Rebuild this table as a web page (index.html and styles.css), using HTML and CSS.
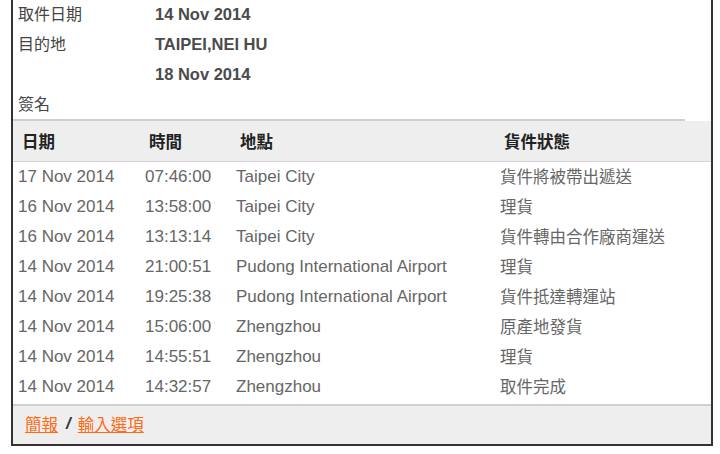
FILE: index.html
```html
<!DOCTYPE html>
<html lang="zh-Hant">
<head>
<meta charset="utf-8">
<title>貨件追蹤</title>
<link rel="stylesheet" href="styles.css">
</head>
<body>
<div class="panel">
  <div class="info">
    <div class="info-row"><span class="label zh">取件日期</span><span class="value">14 Nov 2014</span></div>
    <div class="info-row"><span class="label zh">目的地</span><span class="value">TAIPEI,NEI HU</span></div>
    <div class="info-row"><span class="label zh"></span><span class="value">18 Nov 2014</span></div>
    <div class="info-row"><span class="label zh">簽名</span><span class="value"></span></div>
  </div>
  <div class="divider"></div>
  <div class="table">
    <div class="thead">
      <div class="th zh">日期</div><div class="th zh">時間</div><div class="th zh">地點</div><div class="th zh">貨件狀態</div>
    </div>
    <div class="tr"><div class="td">17 Nov 2014</div><div class="td">07:46:00</div><div class="td">Taipei City</div><div class="td zh">貨件將被帶出遞送</div></div>
    <div class="tr"><div class="td">16 Nov 2014</div><div class="td">13:58:00</div><div class="td">Taipei City</div><div class="td zh">理貨</div></div>
    <div class="tr"><div class="td">16 Nov 2014</div><div class="td">13:13:14</div><div class="td">Taipei City</div><div class="td zh">貨件轉由合作廠商運送</div></div>
    <div class="tr"><div class="td">14 Nov 2014</div><div class="td">21:00:51</div><div class="td">Pudong International Airport</div><div class="td zh">理貨</div></div>
    <div class="tr"><div class="td">14 Nov 2014</div><div class="td">19:25:38</div><div class="td">Pudong International Airport</div><div class="td zh">貨件抵達轉運站</div></div>
    <div class="tr"><div class="td">14 Nov 2014</div><div class="td">15:06:00</div><div class="td">Zhengzhou</div><div class="td zh">原產地發貨</div></div>
    <div class="tr"><div class="td">14 Nov 2014</div><div class="td">14:55:51</div><div class="td">Zhengzhou</div><div class="td zh">理貨</div></div>
    <div class="tr"><div class="td">14 Nov 2014</div><div class="td">14:32:57</div><div class="td">Zhengzhou</div><div class="td zh">取件完成</div></div>
  </div>
  <div class="footer">
    <a href="#" class="link zh">簡報</a><span class="sep">/</span><a href="#" class="link zh">輸入選項</a>
  </div>
</div>
</body>
</html>
```
FILE: styles.css
```css
html, body {
  margin: 0;
  padding: 0;
  background: #ffffff;
}
body {
  font-family: "Liberation Sans", "Noto Sans CJK TC", sans-serif;
  font-size: 17px;
  line-height: 20px;
  color: #444;
  overflow: hidden;
}
.zh {
  font-family: "Noto Sans CJK TC", "Liberation Sans", sans-serif;
  font-size: 16.5px;
}
.panel {
  box-sizing: border-box;
  width: 702px;
  margin: -1px 0 0 11px;
  border-left: 2px solid #333;
  border-right: 2px solid #333;
  border-bottom: 2px solid #333;
}
.info {
  display: flex;
  flex-direction: column;
}
.info-row {
  display: grid;
  grid-template-columns: 137px 1fr;
  height: 30px;
  align-items: center;
  padding-left: 5px;
}
.label {
  color: #444;
  font-size: 16px;
  padding-bottom: 3px;
}
.value {
  font-weight: bold;
  font-size: 16.5px;
  color: #4b4b4b;
}
.divider {
  height: 2px;
  margin-right: 26px;
  background: #cfcfcf;
}
.table {
  display: flex;
  flex-direction: column;
}
.thead, .tr {
  display: grid;
  grid-template-columns: 127px 91px 264px 1fr;
  align-items: center;
}
.thead {
  height: 40px;
  background: #eeeeee;
  border-bottom: 1px solid #dccfdc;
}
.th {
  padding-left: 9px;
  font-weight: bold;
  color: #222;
}
.tr {
  height: 30px;
}
.td {
  padding-left: 5px;
  color: #666;
  white-space: nowrap;
}
.td.zh {
  padding-bottom: 3px;
}
.footer {
  border-top: 2px solid #d0d0d0;
  margin-top: 2px;
  background: #eeeeee;
  height: 38px;
  box-sizing: content-box;
  display: flex;
  align-items: center;
  padding-left: 12px;
  padding-bottom: 0;
}
.footer > * {
  margin-bottom: 2px;
}
.link {
  color: #ff6a13;
  text-decoration: underline;
}
.sep {
  color: #334;
  font-weight: bold;
  font-style: italic;
  margin: 0 7px 2px 8px;
}
```
